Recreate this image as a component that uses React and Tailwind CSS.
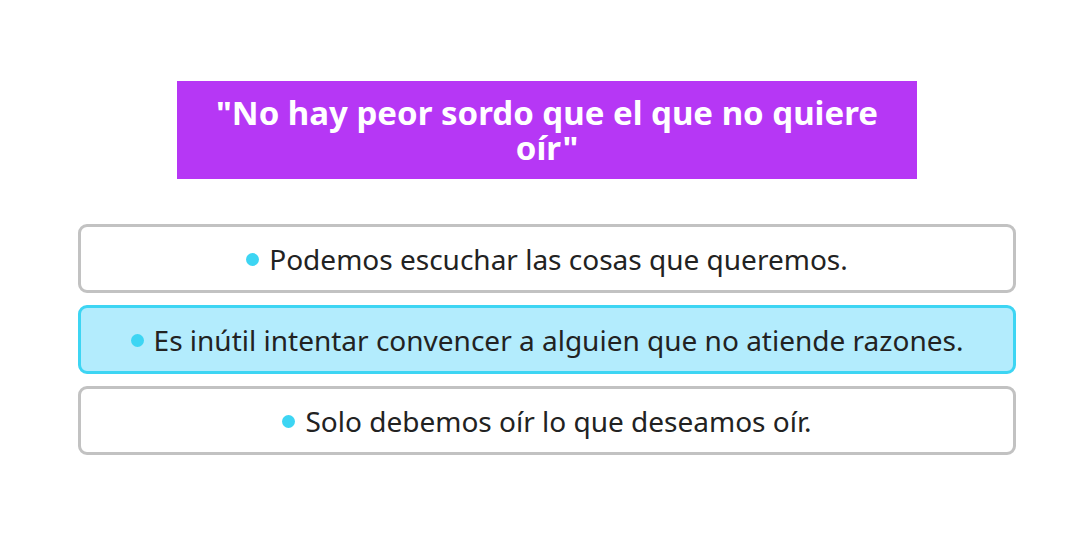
import React from "react";

const options = [
  { text: "Podemos escuchar las cosas que queremos.", selected: false },
  { text: "Es inútil intentar convencer a alguien que no atiende razones.", selected: true },
  { text: "Solo debemos oír lo que deseamos oír.", selected: false },
];

export default function App() {
  return (
    <div
      className="w-full min-h-[542px] bg-white pl-2 pt-[81px] flex flex-col items-center"
      style={{ fontFamily: '"Noto Sans", "Open Sans", sans-serif' }}
    >
      <div className="w-[740px] h-[98px] bg-[#b637f5] flex items-center justify-center px-[30px]">
        <h1 className="text-white font-bold text-[33px] leading-[35px] text-center">
          "No hay peor sordo que el que no quiere oír"
        </h1>
      </div>
      <div className="mt-[45px] w-[938px] flex flex-col gap-[12px]">
        {options.map((o, i) => (
          <div
            key={i}
            className={
              o.selected
                ? "h-[69px] rounded-[9px] border-[3px] border-[#3dd5f3] bg-[#b3ecfd] flex items-center justify-center"
                : "h-[69px] rounded-[9px] border-[3px] border-[#c2c2c2] bg-white flex items-center justify-center"
            }
          >
            <span className="flex items-center text-[28px] text-[#222]">
              <span className="w-[13px] h-[13px] rounded-full bg-[#3dd5f3] mr-[10px] mt-[2px] inline-block" />
              {o.text}
            </span>
          </div>
        ))}
      </div>
    </div>
  );
}
